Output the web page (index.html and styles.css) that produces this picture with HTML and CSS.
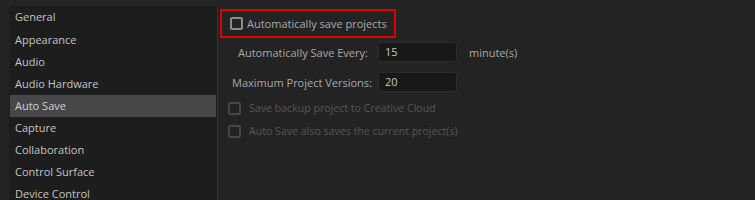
FILE: index.html
```html
<!DOCTYPE html>
<html>
<head>
<meta charset="utf-8">
<link rel="stylesheet" href="styles.css">
</head>
<body>
<div class="app">
  <ul class="nav">
    <li>General</li>
    <li>Appearance</li>
    <li>Audio</li>
    <li>Audio Hardware</li>
    <li class="sel">Auto Save</li>
    <li>Capture</li>
    <li>Collaboration</li>
    <li>Control Surface</li>
    <li>Device Control</li>
  </ul>
  <div class="content">
    <div class="hl">
      <label class="check"><span class="box"></span><span>Automatically save projects</span></label>
    </div>
    <div class="field f1">
      <span class="lbl">Automatically Save Every:</span>
      <span class="input">15</span>
      <span class="unit">minute(s)</span>
    </div>
    <div class="field f2">
      <span class="lbl">Maximum Project Versions:</span>
      <span class="input">20</span>
    </div>
    <label class="check dis c1"><span class="box"></span><span>Save backup project to Creative Cloud</span></label>
    <label class="check dis c2"><span class="box"></span><span>Auto Save also saves the current project(s)</span></label>
  </div>
</div>
</body>
</html>
```
FILE: styles.css
```css
html, body { margin: 0; padding: 0; }
body {
  width: 755px; height: 200px; overflow: hidden;
  background: #232323;
  font-family: "Open Sans", "DejaVu Sans", sans-serif;
  font-size: 11px;
  color: #a9a9a9;
}
.app { display: flex; padding: 6px 0 0 9px; height: 194px; }
.nav {
  list-style: none; margin: 0; padding: 0 1px;
  width: 206px;
  background: #1d1d1d;
  border-right: 1px solid #333;
  border-top: 1px solid #1a1a1a;
  flex: none;
}
.nav li {
  height: 22px; line-height: 21px;
  padding-left: 5px;
  color: #c4c4c4;
  white-space: nowrap;
}
.nav li:first-child { line-height: 20px; }
.nav li.sel { background: #474747; color: #cfcfcf; }
.content { flex: 1; padding: 3px 0 0 2px; display: flex; flex-direction: column; align-items: flex-start; }
.hl {
  border: 2px solid #e10000;
  height: 25px; width: 164px;
  display: flex; align-items: center;
  padding-left: 8px;
}
.check { display: flex; align-items: center; gap: 6px; white-space: nowrap; }
.check .box {
  width: 9px; height: 9px;
  border: 2px solid #8c8c8c; border-radius: 2px;
  flex: none;
}
.hl .check { gap: 4px; color: #aaaaaa; }
.field { display: flex; align-items: center; height: 20px; }
.f1 { margin-top: 4px; padding-left: 18px; }
.f1 .lbl { width: 140px; }
.f2 { margin-top: 10px; padding-left: 12px; }
.f2 .lbl { width: 146px; }
.input {
  width: 71px; height: 18px; line-height: 18px;
  background: #181818; border: 1px solid #2c2c2c; border-radius: 3px;
  padding-left: 6px; color: #c8c8c8;
}
.unit { margin-left: 12px; }
.check.dis { color: #555; margin-left: 8px; gap: 8px; font-size: 10.6px; }
.check.dis .box { border-color: #464646; }
.c1 { margin-top: 9px; }
.c2 { margin-top: 9px; }
```
